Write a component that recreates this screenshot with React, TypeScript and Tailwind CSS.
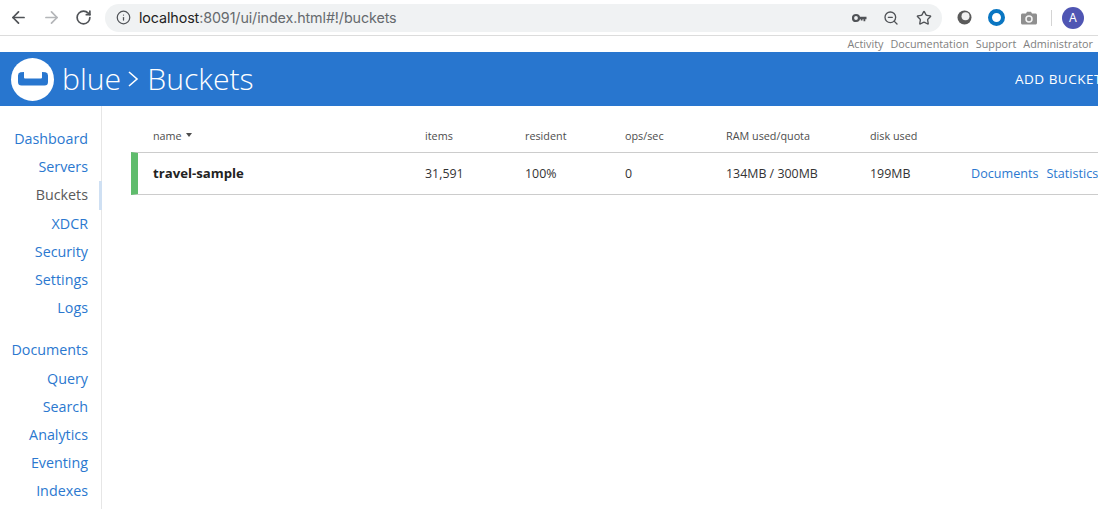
import React from 'react';
import { ArrowLeft, ArrowRight, RotateCw, Info, ZoomOut, Star } from 'lucide-react';

const mainNav = ['Dashboard', 'Servers', 'Buckets', 'XDCR', 'Security', 'Settings', 'Logs'];
const dataNav = ['Documents', 'Query', 'Search', 'Analytics', 'Eventing', 'Indexes'];

const NavItem: React.FC<{ label: string }> = ({ label }) => {
  const active = label === 'Buckets';
  return (
    <div
      className={`h-[28.2px] leading-[28px] text-[14.3px] text-right pr-[11px] border-r-[3px] mr-[-1px] ${
        active ? 'text-[#5a5a5a] border-[#cfe0f3]' : 'text-[#2b78cf] border-transparent'
      }`}
    >
      {label}
    </div>
  );
};

const BrowserBar = () => (
  <div className="h-[36px] flex items-center border-b border-[#dcdcdc] bg-white text-[#5f6368]">
    <ArrowLeft size={19} strokeWidth={2.2} className="ml-[9px] text-[#505357]" />
    <ArrowRight size={19} strokeWidth={2.2} className="ml-[14px] text-[#b4b6b9]" />
    <RotateCw size={17} strokeWidth={2.4} className="ml-[14px] text-[#505357]" />
    <div className="ml-[13px] w-[837px] h-[28px] rounded-full bg-[#f0f2f3] flex items-center pl-[11px]">
      <Info size={15} strokeWidth={2} className="text-[#505357]" />
      <div className="ml-[8px] text-[14.3px] text-[#666a6e] font-['Inter',sans-serif] tracking-[-0.1px]">
        <span className="text-[#222]">localhost</span>:8091/ui/index.html#!/buckets
      </div>
      <div className="ml-auto flex items-center mr-[10px] text-[#505357]">
        <svg width="15" height="10" viewBox="0 0 15 10" className="mr-[16px]">
          <circle cx="4" cy="5" r="3" fill="none" stroke="#505357" strokeWidth="2.2" />
          <path d="M7 3.800h7.500v2.400h-1.200v2h-1.800v-2h-1v1.400H8.800V6.200H7z" fill="#505357" />
        </svg>
        <ZoomOut size={16} strokeWidth={2} className="mr-[17px]" />
        <Star size={16} strokeWidth={2} />
      </div>
    </div>
    <svg width="15" height="15" viewBox="0 0 15 15" className="ml-[15px]">
      <circle cx="7.500" cy="7.500" r="7" fill="#5a5a5a" />
      <path d="M1 9.500a7 7 0 0 0 13 0a7 7 0 0 1-13 0z" fill="#a8a8a8" />
      <circle cx="8.500" cy="6.300" r="4" fill="#f1f1f1" />
    </svg>
    <div className="ml-[16px] w-[17px] h-[17px] rounded-full border-[4.500px] border-[#0a76c2] bg-white" />
    <svg width="16" height="14" viewBox="0 0 16 14" className="ml-[16px]">
      <path
        d="M1.500 2.500H5L6 .8h4l1 1.700h3.500c.8 0 1.500.7 1.500 1.500v8c0 .8-.7 1.500-1.500 1.500h-13C.7 13.500 0 12.800 0 12V4c0-.8.700-1.500 1.500-1.500z"
        fill="#8f8f8f"
      />
      <circle cx="8" cy="8" r="3" fill="none" stroke="#f5f5f5" strokeWidth="1.500" />
    </svg>
    <div className="ml-[14px] w-px h-[16px] bg-[#d4d4d4]" />
    <div className="ml-[10px] w-[22px] h-[22px] rounded-full bg-[#4f55b3] text-white text-[12px] flex items-center justify-center font-['Inter',sans-serif]">
      A
    </div>
  </div>
);

export default function App() {
  return (
    <div className="w-[1098px] h-[509px] overflow-hidden bg-white font-['Open_Sans',sans-serif]">
      <BrowserBar />
      <div className="h-[16px] flex justify-end gap-[7px] pr-[5px] text-[10.8px] leading-[16px] text-[#808080]">
        <span>Activity</span>
        <span>Documentation</span>
        <span>Support</span>
        <span>Administrator</span>
      </div>
      <header className="h-[54px] bg-[#2876cf] flex items-center text-white whitespace-nowrap overflow-hidden">
        <div className="ml-[11px] w-[43px] h-[43px] rounded-full bg-white flex items-center justify-center">
          <svg width="30" height="14" viewBox="0 0 30 14">
            <path
              d="M0 3.500Q0 .8 2.500.3L6 0V5.500Q6 6.500 7 6.500H23Q24 6.500 24 5.500V0L27.500.3Q30 .8 30 3.500V10Q30 13.500 26.500 13.500H3.500Q0 13.500 0 10Z"
              fill="#2876cf"
            />
          </svg>
        </div>
        <div className="ml-[8px] text-[30.2px] leading-none font-light flex items-center">
          <span>blue</span>
          <svg width="12" height="18" viewBox="0 0 12 18" className="ml-[6px] mr-[8px]">
            <path d="M2 2l8 7-8 7" fill="none" stroke="white" strokeWidth="1.600" />
          </svg>
          <span>Buckets</span>
        </div>
        <div className="ml-auto w-[83px] text-[13.5px] tracking-[0.5px] shrink-0 overflow-hidden">ADD BUCKET</div>
      </header>
      <div className="flex">
        <nav className="w-[102px] h-[403px] border-r border-[#e6e6e6] pt-[19px]">
          {mainNav.map(n => (
            <NavItem key={n} label={n} />
          ))}
          <div className="h-[14px]" />
          {dataNav.map(n => (
            <NavItem key={n} label={n} />
          ))}
        </nav>
        <main className="flex-1 pl-[29px] overflow-hidden">
          <div className="h-[46px] flex items-center pt-[14px] pl-[22px] text-[10.8px] text-[#4d4d4d]">
            <div className="w-[272px] flex items-center">
              name
              <span className="ml-[4px] mb-[2px] border-x-[3.5px] border-t-[4px] border-x-transparent border-t-[#4d4d4d]" />
            </div>
            <div className="w-[100px]">items</div>
            <div className="w-[100px]">resident</div>
            <div className="w-[101px]">ops/sec</div>
            <div className="w-[144px]">RAM used/quota</div>
            <div>disk used</div>
          </div>
          <div className="h-[43px] w-[1000px] flex items-center pt-[1px] border-y border-[#cccccc] border-l-[7px] border-l-[#5fbc6c] pl-[15px] text-[12.4px] text-[#333] whitespace-nowrap">
            <div className="w-[272px] text-[13.2px] font-bold text-[#222]">travel-sample</div>
            <div className="w-[100px]">31,591</div>
            <div className="w-[100px]">100%</div>
            <div className="w-[101px]">0</div>
            <div className="w-[144px]">134MB / 300MB</div>
            <div className="w-[101px]">199MB</div>
            <div className="text-[#2b78cf] text-[12.6px] flex gap-[8px]">
              <span>Documents</span>
              <span>Statistics</span>
            </div>
          </div>
        </main>
      </div>
    </div>
  );
}
